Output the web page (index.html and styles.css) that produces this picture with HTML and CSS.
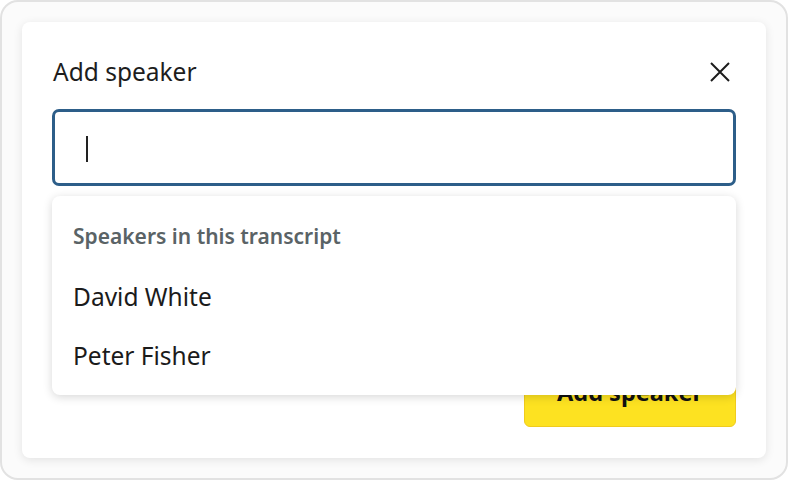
FILE: index.html
```html
<!DOCTYPE html>
<html>
<head>
<meta charset="utf-8">
<link rel="stylesheet" href="styles.css">
</head>
<body>
<div class="frame">
  <div class="card">
    <div class="header">
      <h2 class="title">Add speaker</h2>
      <button class="close" aria-label="Close">
        <svg width="20" height="20" viewBox="0 0 20 20"><path d="M1 1 L19 19 M19 1 L1 19" stroke="#1c1c1c" stroke-width="2" fill="none"/></svg>
      </button>
    </div>
    <div class="field">
      <div class="input"><span class="caret"></span></div>
      <div class="dropdown">
        <div class="dd-heading">Speakers in this transcript</div>
        <div class="dd-list">
          <div class="dd-item">David White</div>
          <div class="dd-item">Peter Fisher</div>
        </div>
      </div>
    </div>
    <div class="actions">
      <button class="primary">Add speaker</button>
    </div>
  </div>
</div>
</body>
</html>
```
FILE: styles.css
```css
* { box-sizing: border-box; }
html, body { margin: 0; padding: 0; background: #ffffff; }
body { width: 788px; height: 480px; font-family: "Noto Sans", "Open Sans", sans-serif; color: #1b1b1b; }
.frame {
  width: 788px; height: 480px;
  border: 2px solid #e2e2e2;
  border-radius: 18px;
  padding: 20px;
  background: #fbfbfb;
}
.card {
  width: 744px; height: 436px;
  background: #fff;
  border-radius: 8px;
  box-shadow: 0 2px 10px rgba(0,0,0,0.10);
  padding: 30px 30px 31px 30px;
  display: flex; flex-direction: column;
}
.header { display: flex; align-items: center; justify-content: space-between; height: 40px; }
.title { margin: 0 0 0 1px; font-size: 24.5px; font-weight: 400; line-height: 40px; color: #1d1d1d; }
.close { border: 0; background: none; padding: 0; width: 20px; height: 20px; margin-right: 6px; display: flex; }
.field { position: relative; margin-top: 17px; }
.input {
  height: 77px;
  border: 3px solid #2d5e89;
  border-radius: 7px;
  display: flex; align-items: center;
  padding-left: 31px;
}
.caret { width: 2px; height: 26px; background: #222; margin-top: 2px; }
.dropdown {
  position: absolute; left: 0; right: 0; top: 87px;
  height: 199px;
  background: #fff;
  border-radius: 8px;
  box-shadow: 0 2px 10px rgba(0,0,0,0.16);
  padding: 23px 21px 0 21px;
  z-index: 2;
}
.dd-heading { font-size: 21px; font-weight: 600; color: #5a6366; line-height: 34px; }
.dd-list { padding-top: 14px; }
.dd-item { font-size: 24.5px; line-height: 59px; color: #1b1b1b; }
.actions { margin-top: auto; display: flex; justify-content: flex-end; }
.primary {
  width: 212px; height: 52px;
  background: #fde221;
  border: 1px solid #f0cb1d;
  border-radius: 6px;
  padding: 0 0 34px 0;
  font-family: inherit; font-size: 23.5px; font-weight: 700; color: #111;
}
```
